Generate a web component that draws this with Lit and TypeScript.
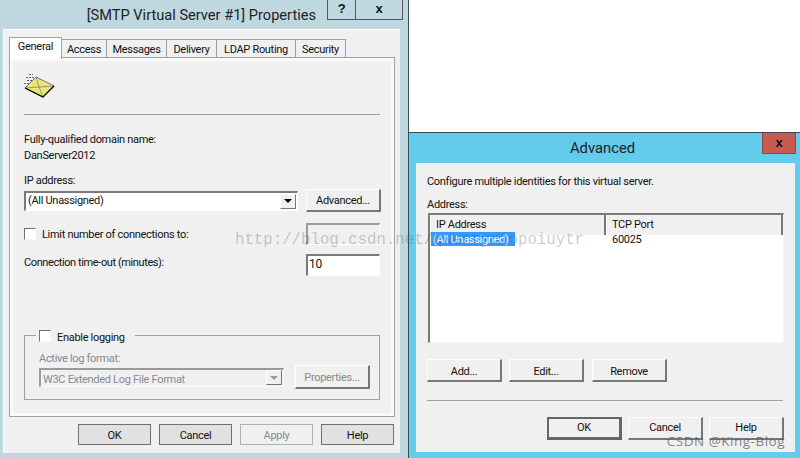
import { LitElement, html, css, svg } from "lit";
import { customElement } from "lit/decorators.js";

const TABS: [string, number][] = [
  ["Access", 45],
  ["Messages", 60],
  ["Delivery", 50],
  ["LDAP Routing", 79],
  ["Security", 50],
];

const envelope = svg`
  <svg class="env" width="32" height="26" viewBox="0 0 32 26">
    <defs>
      <pattern id="dith" width="2" height="2" patternUnits="userSpaceOnUse">
        <rect width="2" height="2" fill="#f2ea78"/>
        <rect width="1" height="1" fill="#e6d84a"/>
      </pattern>
    </defs>
    <g stroke="#666" stroke-width="1" fill="none" stroke-dasharray="2 1">
      <path d="M5 1.5H9M2 4.5H10M3 7.5H8M0 10.5H6"/>
    </g>
    <path d="M1 15L12 4L30 13L19 24Z" fill="url(#dith)" stroke="#555" stroke-width=".8" stroke-linejoin="round"/>
    <path d="M12 4L15 14L30 13M15 14L1 15M15 14L19 24" fill="none" stroke="#777" stroke-width=".7"/>
    <path d="M1 15L19 24L30 13" fill="none" stroke="#000" stroke-width="1.3"/>
  </svg>`;

@customElement("app-root")
export class AppRoot extends LitElement {
  static styles = css`
    :host {
      display: block;
      position: relative;
      width: 800px;
      height: 458px;
      overflow: hidden;
      background: #fff;
      font: 11px/16px Roboto, "Liberation Sans", sans-serif;
      letter-spacing: -0.3px;
      color: #111;
    }
    .win {
      position: absolute;
      box-sizing: border-box;
      display: flex;
      flex-direction: column;
    }
    .left {
      left: 0;
      top: 0;
      width: 409px;
      height: 458px;
      background: #bfd7de;
      border-right: 1px solid #3a4a50;
      padding: 0 8px 5px 3px;
    }
    .titlebar {
      display: flex;
      height: 29px;
      flex: none;
    }
    .ttl {
      flex: 1;
      font-size: 14.6px;
      letter-spacing: 0;
      line-height: 30px;
      text-align: center;
      color: #222;
    }
    .left .ttl { padding-left: 2px; padding-right: 8px; flex: 1; text-align: right; }
    .ctrls { display: flex; height: 20px; margin-right: -3px; flex: none; margin-left: 3px; }
    .ctrl {
      box-sizing: border-box;
      height: 20px;
      border: 1px solid #555;
      border-top: none;
      text-align: center;
      font: bold 13px/18px "Liberation Sans", sans-serif;
      color: #111;
    }
    .ctrl.help { width: 29px; }
    .ctrl.close { width: 47px; border-left: none; }
    .client {
      flex: 1;
      background: #f0f0f0;
      padding: 8px 5px 0 6px;
      display: flex;
      flex-direction: column;
      box-shadow: inset 1px 1px 0 #fff;
    }
    .tabs {
      display: flex;
      align-items: flex-end;
      height: 20px;
      position: relative;
      z-index: 1;
      flex: none;
    }
    .tab {
      box-sizing: border-box;
      height: 18px;
      border: 1px solid #a0a0a0;
      border-left: none;
      border-bottom: none;
      background: #f0f0f0;
      text-align: center;
      line-height: 20px;
    }
    .tab.active {
      width: 53px;
      height: 22px;
      margin-bottom: -2px;
      background: #fff;
      border-left: 1px solid #a0a0a0;
      line-height: 18px;
    }
    .pane {
      box-sizing: border-box;
      width: 386px;
      height: 360px;
      border: 1px solid #a0a0a0;
      box-shadow: inset 0 0 0 3px #fafafa;
      padding: 15px 14px 0;
      display: flex;
      flex-direction: column;
      flex: none;
    }
    .env { display: block; flex: none; }
    .sep { height: 1px; background: #a0a0a0; flex: none; }
    .sep-a { margin-top: 15px; }
    .row { display: flex; align-items: center; flex: none; justify-content: space-between; }
    .line { flex: none; height: 16px; line-height: 18px; }
    .mt16 { margin-top: 16px; }
    .mt9 { margin-top: 9px; }
    .select-row { margin-top: 1px; height: 23px; margin-right: -1px; }
    .limit { margin-top: 11px; height: 22px; }
    .timeout { margin-top: 9px; height: 22px; }
    .timeout-label { padding-bottom: 4px; letter-spacing: -0.4px; }
    .lbl { padding-top: 2px; }
    .lbl-low { padding-top: 4px; }
    .chk-wrap { display: flex; align-items: center; gap: 6px; }
    .chk {
      box-sizing: border-box;
      width: 12px;
      height: 12px;
      background: #fff;
      border: 1px solid #fafafa;
      border-top: 1px solid #707070;
      border-left: 1px solid #707070;
      flex: none;
    }
    .sunken {
      box-sizing: border-box;
      background: #fff;
      border: 1px solid #fff;
      border-top: 2px solid #7a7a7a;
      border-left: 2px solid #7a7a7a;
    }
    .combo {
      height: 20px;
      display: flex;
      align-items: center;
      justify-content: space-between;
      padding-left: 2px;
    }
    .combo.main { width: 274px; }
    .combo.off { width: 245px; background: #f0f0f0; color: #8a8a8a; height: 19px; border-color: #fafafa; border-top-color: #9a9a9a; border-left-color: #9a9a9a; }
    .drop {
      box-sizing: border-box;
      width: 16px;
      height: 15px;
      background: #f0f0f0;
      border: 1px solid #fff;
      border-right-color: #777;
      border-bottom-color: #777;
      display: flex;
      align-items: center;
      justify-content: center;
      flex: none;
      margin-right: 1px;
    }
    .tri { width: 0; height: 0; border: 4px solid transparent; border-top: 4px solid #000; border-bottom: none; }
    .off .tri { border-top-color: #999; }
    .btn3d {
      box-sizing: border-box;
      width: 75px;
      height: 23px;
      background: #f0f0f0;
      border: 1px solid #fff;
      border-right: 2px solid #777;
      border-bottom: 2px solid #777;
      text-align: center;
      line-height: 22px;
      flex: none;
    }
    .btn3d.off { color: #8a8a8a; height: 24px; line-height: 24px; }
    .field { width: 74px; height: 22px; padding-left: 1px; line-height: 17px; font-size: 12px; flex: none; }
    .field.off { background: #f0f0f0; border-top-color: #9a9a9a; border-left-color: #9a9a9a; }
    .group {
      margin-top: 59px;
      height: 65px;
      box-sizing: border-box;
      border: 1px solid #a0a0a0;
      padding: 0 9px 0 14px;
      display: flex;
      flex-direction: column;
      flex: none;
    }
    .legend {
      display: flex;
      align-items: center;
      align-self: flex-start;
      height: 12px;
      box-sizing: border-box;
      width: 99px;
      margin: -6px 0 0 -3px;
      padding: 0 0 0 3px;
      gap: 6px;
      background: #f0f0f0;
    }
    .muted { color: #8a8a8a; margin-top: 8px; }
    .group-row { margin-top: -1px; height: 24px; }
    .foot {
      display: flex;
      justify-content: flex-end;
      gap: 8px;
      width: 385px;
      margin-top: 7px;
      flex: none;
    }
    .fbtn {
      box-sizing: border-box;
      width: 73px;
      height: 21px;
      background: #e1e1e1;
      border: 1px solid #707070;
      text-align: center;
      line-height: 21px;
    }
    .fbtn.off { background: #f0f0f0; border-color: #b0b0b0; color: #8a8a8a; }

    .right {
      left: 409px;
      top: 132px;
      width: 391px;
      height: 326px;
      background: #63cbeb;
      border-top: 1px solid #3a4a50;
      padding: 0 5px 6px 7px;
    }
    .right .titlebar { height: 30px; position: relative; }
    .right .ttl { padding-left: 0; font-size: 14.8px; line-height: 31px; padding-right: 6px; }
    .closebtn {
      position: absolute;
      right: -1px;
      top: 0;
      box-sizing: border-box;
      width: 34px;
      height: 21px;
      background: #c75b50;
      border: 1px solid #8a4a44;
      border-top: none;
      text-align: center;
      font: bold 13px/19px "Liberation Sans", sans-serif;
      color: #111;
    }
    .rclient {
      flex: 1;
      background: #f0f0f0;
      padding: 10px 11px 0;
      display: flex;
      flex-direction: column;
    }
    .addr { margin-top: 7px; }
    .list {
      box-sizing: border-box;
      width: 356px;
      height: 130px;
      margin-top: 1px;
      margin-left: 1px;
      background: #fff;
      flex: none;
      border: 1px solid #f4f4f4;
      border-top: 2px solid #7a7a7a;
      border-left: 2px solid #7a7a7a;
    }
    .lhead {
      display: grid;
      grid-template-columns: 176px 177px;
      height: 16px;
      border-bottom: 1px solid #666;
    }
    .lhead > div {
      background: #f0f0f0;
      border: 1px solid #fff;
      border-right: 2px solid #777;
      border-top: none;
      border-bottom: none;
      padding-left: 5px;
      line-height: 20px;
      box-sizing: border-box;
    }
    .lrow { display: grid; grid-template-columns: 176px 1fr; height: 14px; line-height: 16px; }
    .lrow > :first-child { padding-left: 1px; }
    .lrow > :last-child { padding-left: 6px; }
    .sel { display: block; background: #3399ff; color: #fff; width: 84px; padding-left: 2px; box-sizing: border-box; height: 14px; white-space: nowrap; }
    .actions { display: flex; margin-top: 16px; flex: none; }
    .actions .btn3d { margin-right: 7px; line-height: 24px; }
    .actions .btn3d + .btn3d + .btn3d { margin-left: 1px; }
    .sep-b { margin-top: 18px; width: 356px; }
    .rfoot { display: flex; justify-content: flex-end; gap: 6px; width: 357px; margin-top: 16px; flex: none; }
    .rfoot .btn3d { line-height: 19px; }
    .rfoot .def { border: 2px solid #666; border-right-width: 3px; border-bottom-width: 3px; line-height: 18px; }

    .wm {
      position: absolute;
      left: 235px;
      top: 231px;
      font: 15.72px/18px "Liberation Mono", monospace;
      letter-spacing: 0;
      color: rgba(90, 90, 90, 0.32);
      white-space: nowrap;
      pointer-events: none;
    }
    .csdn {
      position: absolute;
      right: 15px;
      top: 433px;
      font: 13.5px/17px "Open Sans", "Liberation Sans", sans-serif;
      letter-spacing: 0.5px;
      color: rgba(90, 90, 90, 0.75);
      white-space: nowrap;
      pointer-events: none;
    }
  `;

  render() {
    return html`
      <section class="win left">
        <div class="titlebar">
          <div class="ttl">[SMTP Virtual Server #1] Properties</div>
          <div class="ctrls">
            <div class="ctrl help">?</div>
            <div class="ctrl close">x</div>
          </div>
        </div>
        <div class="client">
          <div class="tabs">
            <div class="tab active">General</div>
            ${TABS.map(([t, w]) => html`<div class="tab" style="width:${w}px">${t}</div>`)}
          </div>
          <div class="pane">
            ${envelope}
            <div class="sep sep-a"></div>
            <div class="line mt16">Fully-qualified domain name:</div>
            <div class="line">DanServer2012</div>
            <div class="line mt9">IP address:</div>
            <div class="row select-row">
              <div class="sunken combo main">(All Unassigned)<span class="drop"><i class="tri"></i></span></div>
              <div class="btn3d">Advanced...</div>
            </div>
            <div class="row limit">
              <div class="chk-wrap"><span class="chk"></span><span class="lbl">Limit number of connections to:</span></div>
              <div class="sunken field off"></div>
            </div>
            <div class="row timeout">
              <div class="timeout-label">Connection time-out (minutes):</div>
              <div class="sunken field">10</div>
            </div>
            <div class="group">
              <div class="legend"><span class="chk"></span><span class="lbl-low">Enable logging</span></div>
              <div class="line muted">Active log format:</div>
              <div class="row group-row">
                <div class="sunken combo off"><span class="lbl-low">W3C Extended Log File Format</span><span class="drop"><i class="tri"></i></span></div>
                <div class="btn3d off">Properties...</div>
              </div>
            </div>
          </div>
          <div class="foot">
            <div class="fbtn">OK</div>
            <div class="fbtn">Cancel</div>
            <div class="fbtn off">Apply</div>
            <div class="fbtn">Help</div>
          </div>
        </div>
      </section>

      <section class="win right">
        <div class="titlebar">
          <div class="ttl">Advanced</div>
          <div class="closebtn">x</div>
        </div>
        <div class="rclient">
          <div class="line">Configure multiple identities for this virtual server.</div>
          <div class="line addr">Address:</div>
          <div class="list">
            <div class="lhead"><div>IP Address</div><div>TCP Port</div></div>
            <div class="lrow"><div><span class="sel">(All Unassigned)</span></div><div>60025</div></div>
          </div>
          <div class="actions">
            <div class="btn3d">Add...</div>
            <div class="btn3d">Edit...</div>
            <div class="btn3d">Remove</div>
          </div>
          <div class="sep sep-b"></div>
          <div class="rfoot">
            <div class="btn3d def">OK</div>
            <div class="btn3d">Cancel</div>
            <div class="btn3d">Help</div>
          </div>
        </div>
      </section>

      <div class="wm">http://blog.csdn.net/qwertyuiopoiuytr</div>
      <div class="csdn">CSDN @King-Blog</div>
    `;
  }
}
